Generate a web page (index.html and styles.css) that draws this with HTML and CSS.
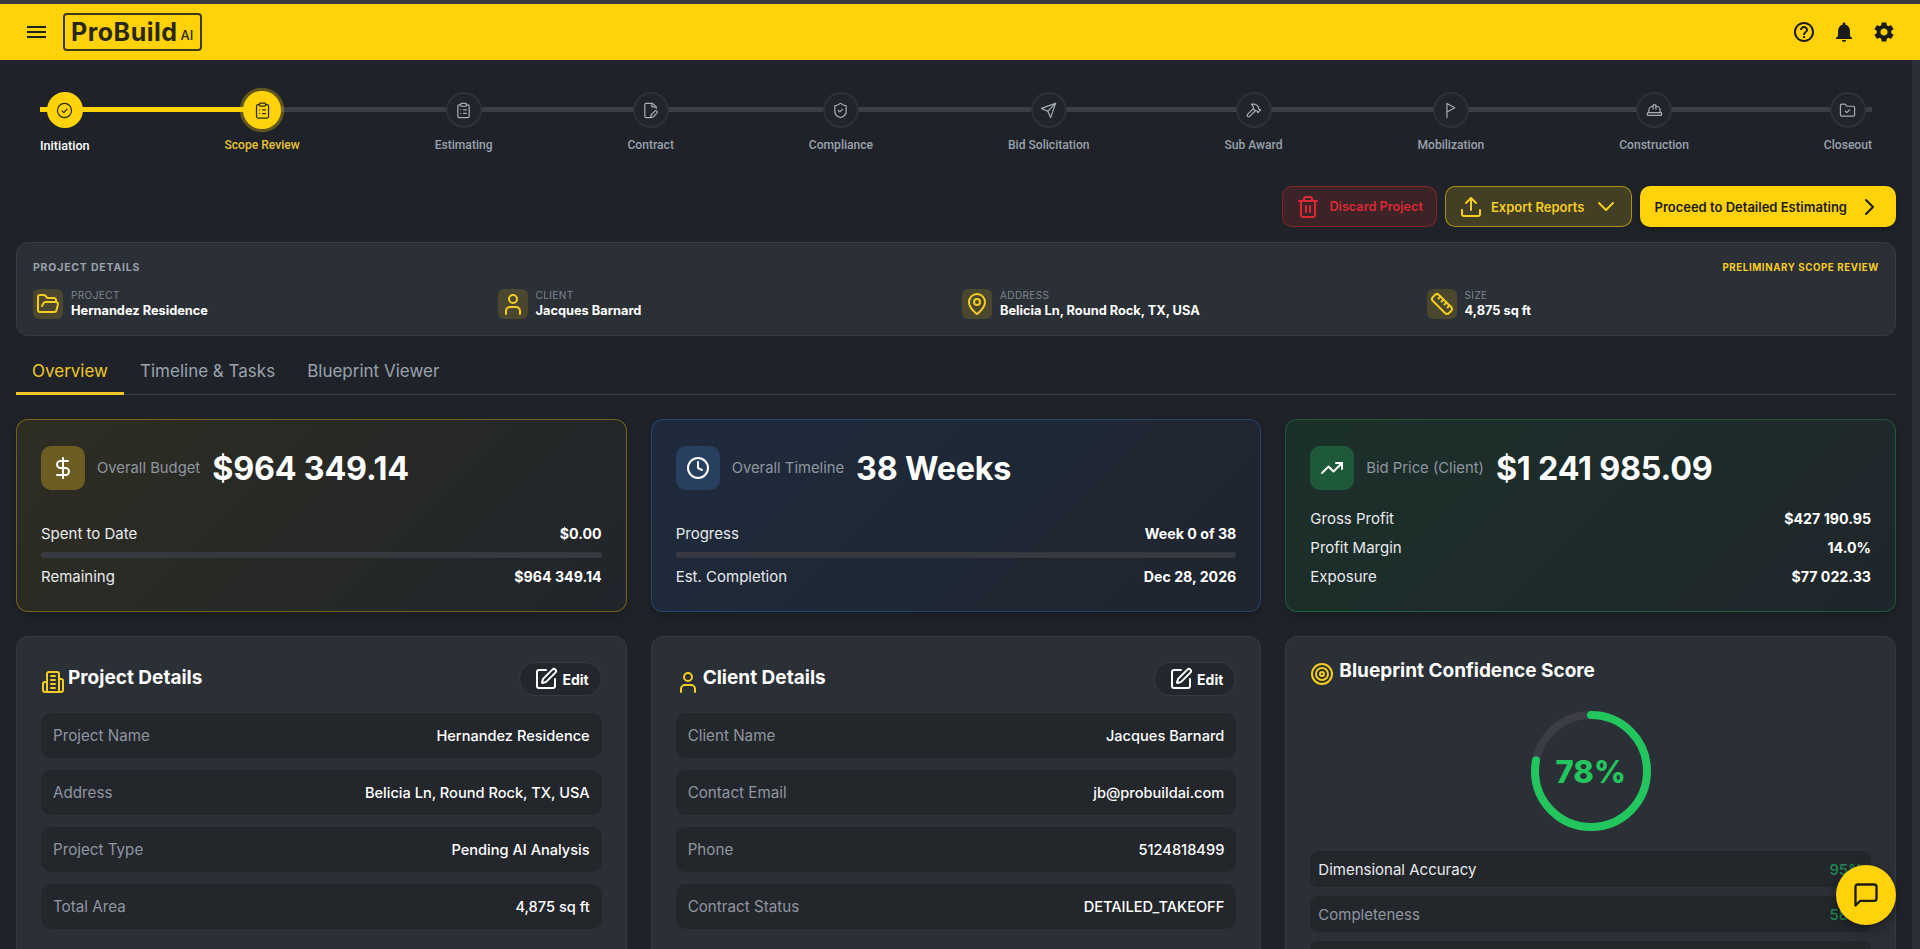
FILE: index.html
```html
<!DOCTYPE html>
<html>

<head>
    <meta charset="utf-8">
    <title>ProBuild AI - Scope Review</title>
    <link rel="stylesheet" href="styles.css">
</head>

<body>
    <!-- icon sprite -->
    <svg class="sprite" xmlns="http://www.w3.org/2000/svg">
        <symbol id="i-check" viewBox="0 0 24 24"><circle cx="12" cy="12" r="10"/><path d="m8.5 12.5 2.5 2.5 4.5-5"/></symbol>
        <symbol id="i-clipboard" viewBox="0 0 24 24"><rect x="8" y="2" width="8" height="4" rx="1"/><path d="M16 4h2a2 2 0 0 1 2 2v14a2 2 0 0 1-2 2H6a2 2 0 0 1-2-2V6a2 2 0 0 1 2-2h2"/><path d="M12 11h4M12 16h4M8 11h.01M8 16h.01"/></symbol>
        <symbol id="i-file-pen" viewBox="0 0 24 24"><path d="M11 22H6a2 2 0 0 1-2-2V4a2 2 0 0 1 2-2h9l5 5v2"/><path d="M14 2v5h6"/><path d="M18.4 12.6a2 2 0 0 1 2.8 2.8L16 21l-4 1 1-4z"/></symbol>
        <symbol id="i-shield" viewBox="0 0 24 24"><path d="M20 13c0 5-3.5 7.5-7.66 8.95a1 1 0 0 1-.67-.01C7.5 20.5 4 18 4 13V6a1 1 0 0 1 1-1c2 0 4.5-1.2 6.24-2.72a1.17 1.17 0 0 1 1.52 0C14.51 3.81 17 5 19 5a1 1 0 0 1 1 1z"/><path d="m9 12 2 2 4-4"/></symbol>
        <symbol id="i-send" viewBox="0 0 24 24"><path d="m22 2-7 20-4-9-9-4Z"/><path d="M22 2 11 13"/></symbol>
        <symbol id="i-hammer" viewBox="0 0 24 24"><path d="m15 12-8.373 8.373a1 1 0 1 1-3-3L12 9"/><path d="m18 15 4-4"/><path d="m21.5 11.5-1.914-1.914A2 2 0 0 1 19 8.172V7l-2.26-2.26a6 6 0 0 0-4.202-1.756L9 2.96l.92.82A6.18 6.18 0 0 1 12 8.4V10l2 2h1.172a2 2 0 0 1 1.414.586L18.5 14.5"/></symbol>
        <symbol id="i-flag" viewBox="0 0 24 24"><path d="M7 22V2l11 6-11 6"/></symbol>
        <symbol id="i-hardhat" viewBox="0 0 24 24"><path d="M2 18a1 1 0 0 0 1 1h18a1 1 0 0 0 1-1v-2a1 1 0 0 0-1-1H3a1 1 0 0 0-1 1v2z"/><path d="M10 10V5a1 1 0 0 1 1-1h2a1 1 0 0 1 1 1v5"/><path d="M4 15v-3a6 6 0 0 1 6-6"/><path d="M14 6a6 6 0 0 1 6 6v3"/></symbol>
        <symbol id="i-folder-check" viewBox="0 0 24 24"><path d="M20 20a2 2 0 0 0 2-2V8a2 2 0 0 0-2-2h-7.9a2 2 0 0 1-1.69-.9L9.6 3.9A2 2 0 0 0 7.93 3H4a2 2 0 0 0-2 2v13a2 2 0 0 0 2 2Z"/><path d="m9 13 2 2 4-4"/></symbol>
        <symbol id="i-trash" viewBox="0 0 24 24"><path d="M3 6h18"/><path d="M19 6v14c0 1-1 2-2 2H7c-1 0-2-1-2-2V6"/><path d="M8 6V4c0-1 1-2 2-2h4c1 0 2 1 2 2v2"/><path d="M10 11v6M14 11v6"/></symbol>
        <symbol id="i-upload" viewBox="0 0 24 24"><path d="M12 3v12"/><path d="m17 8-5-5-5 5"/><path d="M21 15v4a2 2 0 0 1-2 2H5a2 2 0 0 1-2-2v-4"/></symbol>
        <symbol id="i-chev-down" viewBox="0 0 24 24"><path d="m5 8 7 7 7-7"/></symbol>
        <symbol id="i-chev-right" viewBox="0 0 24 24"><path d="m9 5 7 7-7 7"/></symbol>
        <symbol id="i-folder-open" viewBox="0 0 24 24"><path d="m6 14 1.5-2.9A2 2 0 0 1 9.24 10H20a2 2 0 0 1 1.94 2.5l-1.54 6a2 2 0 0 1-1.95 1.5H4a2 2 0 0 1-2-2V5a2 2 0 0 1 2-2h3.9a2 2 0 0 1 1.69.9l.81 1.2a2 2 0 0 0 1.67.9H18a2 2 0 0 1 2 2v2"/></symbol>
        <symbol id="i-user" viewBox="0 0 24 24"><circle cx="12" cy="7" r="4"/><path d="M19 22v-3a4 4 0 0 0-4-4H9a4 4 0 0 0-4 4v3"/></symbol>
        <symbol id="i-pin" viewBox="0 0 24 24"><path d="M20 10c0 4.993-5.539 10.193-7.399 11.799a1 1 0 0 1-1.202 0C9.539 20.193 4 14.993 4 10a8 8 0 0 1 16 0"/><circle cx="12" cy="10" r="3"/></symbol>
        <symbol id="i-ruler" viewBox="0 0 24 24"><path d="M21.3 15.3a2.4 2.4 0 0 1 0 3.4l-2.6 2.6a2.4 2.4 0 0 1-3.4 0L2.7 8.7a2.41 2.41 0 0 1 0-3.4l2.6-2.6a2.41 2.41 0 0 1 3.4 0Z"/><path d="m14.5 12.5 2-2M11.5 9.5l2-2M8.5 6.5l2-2M17.5 15.5l2-2"/></symbol>
        <symbol id="i-dollar" viewBox="0 0 24 24"><path d="M12 2v20"/><path d="M17 5H9.5a3.5 3.5 0 0 0 0 7h5a3.5 3.5 0 0 1 0 7H6"/></symbol>
        <symbol id="i-clock" viewBox="0 0 24 24"><circle cx="12" cy="12" r="10"/><path d="M12 6v6l4 2"/></symbol>
        <symbol id="i-trend" viewBox="0 0 24 24"><path d="M22 7l-8.5 8.5-5-5L2 17"/><path d="M16 7h6v6"/></symbol>
        <symbol id="i-building" viewBox="0 0 24 24"><path d="M6 22V4a2 2 0 0 1 2-2h8a2 2 0 0 1 2 2v18Z"/><path d="M6 12H4a2 2 0 0 0-2 2v6a2 2 0 0 0 2 2h2"/><path d="M18 9h2a2 2 0 0 1 2 2v9a2 2 0 0 1-2 2h-2"/><path d="M10 6h4M10 10h4M10 14h4M10 18h4"/></symbol>
        <symbol id="i-target" viewBox="0 0 24 24"><circle cx="12" cy="12" r="10"/><circle cx="12" cy="12" r="6"/><circle cx="12" cy="12" r="2"/></symbol>
        <symbol id="i-pen-square" viewBox="0 0 24 24"><path d="M12 3H5a2 2 0 0 0-2 2v14a2 2 0 0 0 2 2h14a2 2 0 0 0 2-2v-7"/><path d="M18.375 2.625a1 1 0 0 1 3 3l-9.013 9.014a2 2 0 0 1-.853.505l-2.873.84a.5.5 0 0 1-.62-.62l.84-2.873a2 2 0 0 1 .506-.852z"/></symbol>
        <symbol id="i-chat" viewBox="0 0 24 24"><path d="M21 15a2 2 0 0 1-2 2H7l-4 4V5a2 2 0 0 1 2-2h14a2 2 0 0 1 2 2z"/></symbol>
    </svg>

    <header class="topbar">
        <div class="topbar-left">
            <button class="menu-btn" aria-label="Menu"><span></span><span></span><span></span></button>
            <div class="logo"><span class="logo-name">ProBuild</span><span class="logo-ai">AI</span></div>
        </div>
        <div class="topbar-right">
            <svg class="top-icon" viewBox="0 0 24 24"><path d="M11 18h2v-2h-2v2zm1-16C6.48 2 2 6.48 2 12s4.48 10 10 10 10-4.48 10-10S17.52 2 12 2zm0 18c-4.41 0-8-3.59-8-8s3.59-8 8-8 8 3.59 8 8-3.59 8-8 8zm0-14c-2.21 0-4 1.79-4 4h2c0-1.1.9-2 2-2s2 .9 2 2c0 2-3 1.75-3 5h2c0-2.25 3-2.5 3-5 0-2.21-1.79-4-4-4z"/></svg>
            <svg class="top-icon" viewBox="0 0 24 24"><path d="M12 22c1.1 0 2-.9 2-2h-4c0 1.1.89 2 2 2zm6-6v-5c0-3.07-1.64-5.64-4.5-6.32V4c0-.83-.67-1.5-1.5-1.5s-1.5.67-1.5 1.5v.68C7.63 5.36 6 7.92 6 11v5l-2 2v1h16v-1l-2-2z"/></svg>
            <svg class="top-icon" viewBox="0 0 24 24"><path d="M19.14 12.94c.04-.3.06-.61.06-.94 0-.32-.02-.64-.07-.94l2.03-1.58c.18-.14.23-.41.12-.61l-1.92-3.32c-.12-.22-.37-.29-.59-.22l-2.39.96c-.5-.38-1.03-.7-1.62-.94l-.36-2.54c-.04-.24-.24-.41-.48-.41h-3.84c-.24 0-.43.17-.47.41l-.36 2.54c-.59.24-1.13.57-1.62.94l-2.39-.96c-.22-.08-.47 0-.59.22L2.74 8.87c-.12.21-.08.47.12.61l2.03 1.58c-.05.3-.09.63-.09.94s.02.64.07.94l-2.03 1.58c-.18.14-.23.41-.12.61l1.92 3.32c.12.22.37.29.59.22l2.39-.96c.5.38 1.03.7 1.62.94l.36 2.54c.05.24.24.41.48.41h3.84c.24 0 .44-.17.47-.41l.36-2.54c.59-.24 1.13-.56 1.62-.94l2.39.96c.22.08.47 0 .59-.22l1.92-3.32c.12-.22.07-.47-.12-.61l-2.01-1.58zM12 15.6c-1.98 0-3.6-1.62-3.6-3.6s1.62-3.6 3.6-3.6 3.6 1.62 3.6 3.6-1.62 3.6-3.6 3.6z"/></svg>
        </div>
    </header>

    <div class="page">
        <main class="content">

            <div class="stepper">
                <div class="stepper-line"><div class="stepper-fill" style="width: 12.06%"></div></div>
                <div class="step done"><div class="step-dot"><svg class="ico"><use href="#i-check"/></svg></div><span>Initiation</span></div>
                <div class="step current"><div class="step-dot"><svg class="ico"><use href="#i-clipboard"/></svg></div><span>Scope Review</span></div>
                <div class="step"><div class="step-dot"><svg class="ico"><use href="#i-clipboard"/></svg></div><span>Estimating</span></div>
                <div class="step"><div class="step-dot"><svg class="ico"><use href="#i-file-pen"/></svg></div><span>Contract</span></div>
                <div class="step"><div class="step-dot"><svg class="ico"><use href="#i-shield"/></svg></div><span>Compliance</span></div>
                <div class="step"><div class="step-dot"><svg class="ico"><use href="#i-send"/></svg></div><span>Bid Solicitation</span></div>
                <div class="step"><div class="step-dot"><svg class="ico"><use href="#i-hammer"/></svg></div><span>Sub Award</span></div>
                <div class="step"><div class="step-dot"><svg class="ico"><use href="#i-flag"/></svg></div><span>Mobilization</span></div>
                <div class="step"><div class="step-dot"><svg class="ico"><use href="#i-hardhat"/></svg></div><span>Construction</span></div>
                <div class="step"><div class="step-dot"><svg class="ico"><use href="#i-folder-check"/></svg></div><span>Closeout</span></div>
            </div>

            <div class="actions">
                <button class="btn btn-discard"><svg class="ico"><use href="#i-trash"/></svg>Discard Project</button>
                <button class="btn btn-export"><svg class="ico"><use href="#i-upload"/></svg>Export Reports<svg class="ico chev"><use href="#i-chev-down"/></svg></button>
                <button class="btn btn-proceed">Proceed to Detailed Estimating<svg class="ico chev"><use href="#i-chev-right"/></svg></button>
            </div>

            <section class="summary">
                <div class="summary-head">
                    <span class="summary-title">PROJECT DETAILS</span>
                    <span class="summary-tag">PRELIMINARY SCOPE REVIEW</span>
                </div>
                <div class="summary-grid">
                    <div class="summary-item">
                        <div class="summary-icon"><svg class="ico"><use href="#i-folder-open"/></svg></div>
                        <div><div class="summary-label">PROJECT</div><div class="summary-value">Hernandez Residence</div></div>
                    </div>
                    <div class="summary-item">
                        <div class="summary-icon"><svg class="ico"><use href="#i-user"/></svg></div>
                        <div><div class="summary-label">CLIENT</div><div class="summary-value">Jacques Barnard</div></div>
                    </div>
                    <div class="summary-item">
                        <div class="summary-icon"><svg class="ico"><use href="#i-pin"/></svg></div>
                        <div><div class="summary-label">ADDRESS</div><div class="summary-value">Belicia Ln, Round Rock, TX, USA</div></div>
                    </div>
                    <div class="summary-item">
                        <div class="summary-icon"><svg class="ico"><use href="#i-ruler"/></svg></div>
                        <div><div class="summary-label">SIZE</div><div class="summary-value">4,875 sq ft</div></div>
                    </div>
                </div>
            </section>

            <nav class="tabs">
                <a class="tab active">Overview</a>
                <a class="tab">Timeline &amp; Tasks</a>
                <a class="tab">Blueprint Viewer</a>
            </nav>

            <div class="card-grid">
                <section class="stat-card stat-budget">
                    <div class="stat-head">
                        <div class="stat-icon"><svg class="ico"><use href="#i-dollar"/></svg></div>
                        <span class="stat-label">Overall Budget</span>
                        <span class="stat-value">$964 349.14</span>
                    </div>
                    <div class="stat-body">
                        <div class="stat-row"><span>Spent to Date</span><b>$0.00</b></div>
                        <div class="progress"></div>
                        <div class="stat-row"><span>Remaining</span><b>$964 349.14</b></div>
                    </div>
                </section>

                <section class="stat-card stat-timeline">
                    <div class="stat-head">
                        <div class="stat-icon"><svg class="ico"><use href="#i-clock"/></svg></div>
                        <span class="stat-label">Overall Timeline</span>
                        <span class="stat-value">38 Weeks</span>
                    </div>
                    <div class="stat-body">
                        <div class="stat-row"><span>Progress</span><b>Week 0 of 38</b></div>
                        <div class="progress"></div>
                        <div class="stat-row"><span>Est. Completion</span><b>Dec 28, 2026</b></div>
                    </div>
                </section>

                <section class="stat-card stat-bid">
                    <div class="stat-head">
                        <div class="stat-icon"><svg class="ico"><use href="#i-trend"/></svg></div>
                        <span class="stat-label">Bid Price (Client)</span>
                        <span class="stat-value">$1 241 985.09</span>
                    </div>
                    <div class="stat-body stat-body-list">
                        <div class="stat-row"><span>Gross Profit</span><b>$427 190.95</b></div>
                        <div class="stat-row"><span>Profit Margin</span><b>14.0%</b></div>
                        <div class="stat-row"><span>Exposure</span><b>$77 022.33</b></div>
                    </div>
                </section>

                <section class="panel">
                    <div class="panel-head">
                        <h3 class="panel-title"><svg class="ico"><use href="#i-building"/></svg>Project Details</h3>
                        <button class="edit-btn"><svg class="ico"><use href="#i-pen-square"/></svg>Edit</button>
                    </div>
                    <div class="info-row"><span>Project Name</span><b>Hernandez Residence</b></div>
                    <div class="info-row"><span>Address</span><b>Belicia Ln, Round Rock, TX, USA</b></div>
                    <div class="info-row"><span>Project Type</span><b>Pending AI Analysis</b></div>
                    <div class="info-row"><span>Total Area</span><b>4,875 sq ft</b></div>
                </section>

                <section class="panel">
                    <div class="panel-head">
                        <h3 class="panel-title"><svg class="ico"><use href="#i-user"/></svg>Client Details</h3>
                        <button class="edit-btn"><svg class="ico"><use href="#i-pen-square"/></svg>Edit</button>
                    </div>
                    <div class="info-row"><span>Client Name</span><b>Jacques Barnard</b></div>
                    <div class="info-row"><span>Contact Email</span><b>jb@probuildai.com</b></div>
                    <div class="info-row"><span>Phone</span><b>5124818499</b></div>
                    <div class="info-row"><span>Contract Status</span><b>DETAILED_TAKEOFF</b></div>
                </section>

                <section class="panel">
                    <h3 class="panel-title score-title"><svg class="ico"><use href="#i-target"/></svg>Blueprint Confidence Score</h3>
                    <div class="gauge">
                        <svg viewBox="0 0 120 120">
                            <circle class="gauge-track" cx="60" cy="60" r="56"/>
                            <circle class="gauge-bar" cx="60" cy="60" r="56" pathLength="100" stroke-dasharray="78 100" transform="rotate(-90 60 60)"/>
                        </svg>
                        <span class="gauge-text">78%</span>
                    </div>
                    <div class="score-row"><span>Dimensional Accuracy</span><b>95%</b></div>
                    <div class="score-row score-dim"><span>Completeness</span><b>58%</b></div>
                    <div class="score-row score-dim"></div>
                </section>
            </div>
        </main>
        <div class="rail"></div>
    </div>

    <button class="chat-btn" aria-label="Chat"><svg class="ico"><use href="#i-chat"/></svg></button>
</body>

</html>
```
FILE: styles.css
```css
* {
    box-sizing: border-box;
}

html,
body {
    height: 100%;
}

body {
    margin: 0;
    display: flex;
    flex-direction: column;
    overflow: hidden;
    font-family: Inter, "Liberation Sans", sans-serif;
    background-color: #1f2329;
    color: #fff;
}

button {
    font-family: inherit;
    cursor: pointer;
}

.sprite {
    display: none;
}

.ico {
    width: 24px;
    height: 24px;
    flex-shrink: 0;
    fill: none;
    stroke: currentColor;
    stroke-width: 2;
    stroke-linecap: round;
    stroke-linejoin: round;
}

/* top bar */
.topbar {
    height: 60px;
    flex-shrink: 0;
    display: flex;
    justify-content: space-between;
    align-items: center;
    padding: 0 24px 0 27px;
    background-color: #ffd20a;
    border-top: 4px solid #3b3b3b;
}

.topbar-left {
    display: flex;
    align-items: center;
    gap: 17px;
}

.menu-btn {
    width: 19px;
    padding: 0;
    border: none;
    background: none;
    display: flex;
    flex-direction: column;
    gap: 3px;
}

.menu-btn span {
    height: 2px;
    background-color: #222;
}

.logo {
    height: 38px;
    width: 139px;
    display: flex;
    align-items: center;
    gap: 3px;
    padding: 0 6px;
    border: 2px solid #3c3a16;
    border-radius: 4px;
    color: #2a2810;
}

.logo-name {
    font-size: 25px;
    font-weight: 700;
    letter-spacing: 0.5px;
    line-height: 1;
}

.logo-ai {
    font-size: 13px;
    font-weight: 500;
    margin-top: 6px;
}

.topbar-right {
    display: flex;
    align-items: center;
    gap: 16px;
}

.top-icon {
    width: 24px;
    height: 24px;
    fill: #1a1a1a;
}

/* page */
.page {
    flex: 1;
    min-height: 0;
    display: flex;
}

.content {
    flex: 1;
    min-width: 0;
    overflow: hidden;
    padding: 32px 16px 0;
}

.rail {
    width: 8px;
    background-color: #2b2f36;
}

/* stepper */
.stepper {
    position: relative;
    display: flex;
    justify-content: space-between;
    margin: 0 24px;
}

.stepper-line {
    position: absolute;
    left: 0;
    right: 0;
    top: 15px;
    height: 5px;
    background-color: #3a3e45;
}

.stepper-fill {
    height: 100%;
    background-color: #ffd20a;
}

.step {
    position: relative;
    display: flex;
    flex-direction: column;
    align-items: center;
    gap: 9px;
    font-family: Roboto, sans-serif;
    font-size: 12.1px;
    font-weight: 500;
    line-height: 17px;
    color: #98a1ad;
}

.step-dot {
    width: 36px;
    height: 36px;
    border-radius: 50%;
    display: flex;
    align-items: center;
    justify-content: center;
    background-color: #21252b;
    border: 2px solid #2e3238;
    color: #a6adb8;
}

.step-dot .ico {
    width: 17px;
    height: 17px;
    stroke-width: 1.7;
}

.step.done {
    color: #fff;
    font-size: 12.6px;
}

.step.current {
    color: #e8c234;
}

.step.done .step-dot,
.step.current .step-dot {
    background-color: #ffd20a;
    border: none;
    color: #2b2a14;
}

.step.current .step-dot {
    transform: scale(1.06);
    box-shadow: 0 0 0 3px rgba(255, 210, 10, 0.3);
}

/* action buttons */
.actions {
    display: flex;
    justify-content: flex-end;
    gap: 8px;
    margin-top: 32px;
}

.btn {
    height: 41px;
    display: flex;
    align-items: center;
    padding: 0 13px;
    border-radius: 10px;
    font-size: 13px;
    font-weight: 600;
}

.btn-discard {
    gap: 9px;
    border: 1px solid rgba(220, 38, 38, 0.45);
    background-color: rgba(220, 38, 38, 0.15);
    color: #dc2935;
    font-size: 12.7px;
}

.btn-export {
    gap: 8px;
    border: 1px solid rgba(255, 210, 10, 0.55);
    background-color: rgba(255, 210, 10, 0.16);
    color: #f5cd21;
}

.btn-export .chev {
    margin-left: 1px;
}

.btn-proceed {
    gap: 10px;
    padding: 0 15px;
    border: none;
    background-color: #ffd20a;
    color: #1c1c14;
    box-shadow: 0 2px 6px rgba(0, 0, 0, 0.3);
}

/* project summary strip */
.summary {
    margin-top: 15px;
    height: 94px;
    padding: 16px;
    background-color: #2b2f36;
    border: 1px solid #373b42;
    border-radius: 12px;
}

.summary-head {
    display: flex;
    justify-content: space-between;
    align-items: center;
    height: 16px;
    font-weight: 700;
}

.summary-title {
    font-size: 10.5px;
    letter-spacing: 0.8px;
    color: #9aa2ad;
}

.summary-tag {
    font-size: 9.7px;
    letter-spacing: 0.6px;
    color: #f5cd21;
}

.summary-grid {
    display: grid;
    grid-template-columns: repeat(4, 1fr);
    gap: 12px;
    margin-top: 14px;
}

.summary-item {
    display: flex;
    align-items: center;
    gap: 8px;
}

.summary-icon {
    width: 30px;
    height: 30px;
    border-radius: 6px;
    display: flex;
    align-items: center;
    justify-content: center;
    background-color: rgba(255, 210, 10, 0.15);
    color: #f5cd21;
}

.summary-label {
    font-size: 10px;
    line-height: 12px;
    letter-spacing: 0.4px;
    color: #7d8590;
}

.summary-value {
    margin-top: 2px;
    font-size: 12.8px;
    font-weight: 700;
    line-height: 16px;
}

/* tabs */
.tabs {
    display: flex;
    height: 58px;
    margin-top: 1px;
    border-bottom: 1px solid #3a3e45;
}

.tab {
    padding: 12px 16px 0;
    display: flex;
    align-items: center;
    font-size: 17px;
    font-weight: 400;
    color: #9aa2ad;
    border-bottom: 3px solid transparent;
    margin-bottom: -1px;
}

.tab.active {
    color: #f0c724;
    border-bottom-color: #f0c724;
}

/* cards */
.card-grid {
    display: grid;
    grid-template-columns: repeat(3, 1fr);
    gap: 24px;
    margin-top: 24px;
}

.stat-card {
    padding: 26px 24px 24px;
    border: 1px solid;
    border-radius: 12px;
    box-shadow: 0 4px 8px rgba(0, 0, 0, 0.2);
}

.stat-budget {
    border-color: rgba(255, 210, 10, 0.35);
    background: linear-gradient(135deg, #2e2d22, #20252b);
}

.stat-timeline {
    border-color: rgba(59, 130, 246, 0.3);
    background: linear-gradient(135deg, #1e2a3c, #1f252e);
}

.stat-bid {
    border-color: rgba(34, 197, 94, 0.3);
    background: linear-gradient(135deg, #1b3029, #20262c);
}

.stat-head {
    display: flex;
    align-items: center;
    height: 44px;
}

.stat-icon {
    width: 44px;
    height: 44px;
    margin-right: 12px;
    border-radius: 10px;
    display: flex;
    align-items: center;
    justify-content: center;
    color: #fff;
}

.stat-budget .stat-icon {
    background-color: #6c5d22;
}

.stat-timeline .stat-icon {
    background-color: #27405f;
}

.stat-bid .stat-icon {
    background-color: #1e5a3a;
}

.stat-label {
    margin-right: 12px;
    font-size: 14.8px;
    color: #8f96a0;
}

.stat-value {
    font-size: 32.3px;
    font-weight: 700;
    letter-spacing: -0.2px;
}

.stat-body {
    margin-top: 32px;
}

.stat-row {
    display: flex;
    justify-content: space-between;
    height: 22px;
    align-items: center;
    font-size: 15px;
    color: #e9ebee;
}

.stat-row b,
.info-row b {
    color: #fff;
}

.stat-row b {
    font-size: 14.2px;
    font-weight: 700;
}

.progress {
    height: 6px;
    margin: 8px 0 7px;
    border-radius: 3px;
    background-color: #363a40;
}

.stat-body-list {
    margin-top: 17px;
    display: flex;
    flex-direction: column;
    gap: 7px;
}

.panel {
    height: 420px;
    padding: 25px 24px;
    background-color: #2b2f36;
    border: 1px solid #363a41;
    border-radius: 12px;
}

.panel-head {
    display: flex;
    justify-content: space-between;
    align-items: center;
    height: 34px;
    margin-bottom: 17px;
}

.panel-title {
    margin: 0 0 4px;
    display: flex;
    align-items: center;
    gap: 3px;
    font-size: 19px;
    font-weight: 700;
}

.panel-title .ico {
    color: #f5cd21;
    margin-top: 5px;
    margin-bottom: -5px;
}

.edit-btn {
    height: 34px;
    display: flex;
    align-items: center;
    gap: 4px;
    padding: 0 12px 0 14px;
    border: 1px solid #363a41;
    border-radius: 17px;
    background-color: #23272d;
    color: #fff;
    font-size: 14px;
    font-weight: 700;
}

.info-row {
    height: 45px;
    margin-bottom: 12px;
    padding: 0 12px;
    display: flex;
    justify-content: space-between;
    align-items: center;
    border-radius: 10px;
    background-color: #23272c;
    font-size: 15.2px;
    color: #8f96a0;
}

.info-row b {
    font-size: 14.6px;
    font-weight: 500;
}

/* confidence score */
.score-title {
    height: 18px;
    margin-bottom: 0;
    line-height: 18px;
    align-items: flex-start;
    gap: 5px;
}

.score-title .ico {
    margin-top: 0;
    margin-bottom: 0;
}

.gauge {
    position: relative;
    width: 120px;
    height: 120px;
    margin: 31px auto 20px;
}

.gauge svg {
    width: 120px;
    height: 120px;
    display: block;
}

.gauge circle {
    fill: none;
    stroke-width: 8;
}

.gauge-track {
    stroke: #3a3e45;
}

.gauge-bar {
    stroke: #22c55e;
    stroke-linecap: round;
}

.gauge-text {
    position: absolute;
    inset: 0;
    display: flex;
    align-items: center;
    justify-content: center;
    font-size: 31px;
    font-weight: 800;
    color: #22c55e;
}

.score-row {
    height: 36px;
    margin-bottom: 9px;
    padding: 0 8px;
    display: flex;
    justify-content: space-between;
    align-items: center;
    border-radius: 8px;
    background-color: #23272c;
    font-size: 15px;
    color: #e9ebee;
}

.score-row b {
    font-weight: 500;
    color: #1f8a55;
}

.score-dim {
    color: #8f96a0;
}

/* floating chat button */
.chat-btn {
    position: fixed;
    right: 24px;
    bottom: 24px;
    width: 60px;
    height: 60px;
    display: flex;
    align-items: center;
    justify-content: center;
    border: none;
    border-radius: 50%;
    background-color: #ffd20a;
    color: #1c1c14;
    box-shadow: 0 4px 12px rgba(0, 0, 0, 0.35);
}

.chat-btn .ico {
    width: 28px;
    height: 28px;
}
```
